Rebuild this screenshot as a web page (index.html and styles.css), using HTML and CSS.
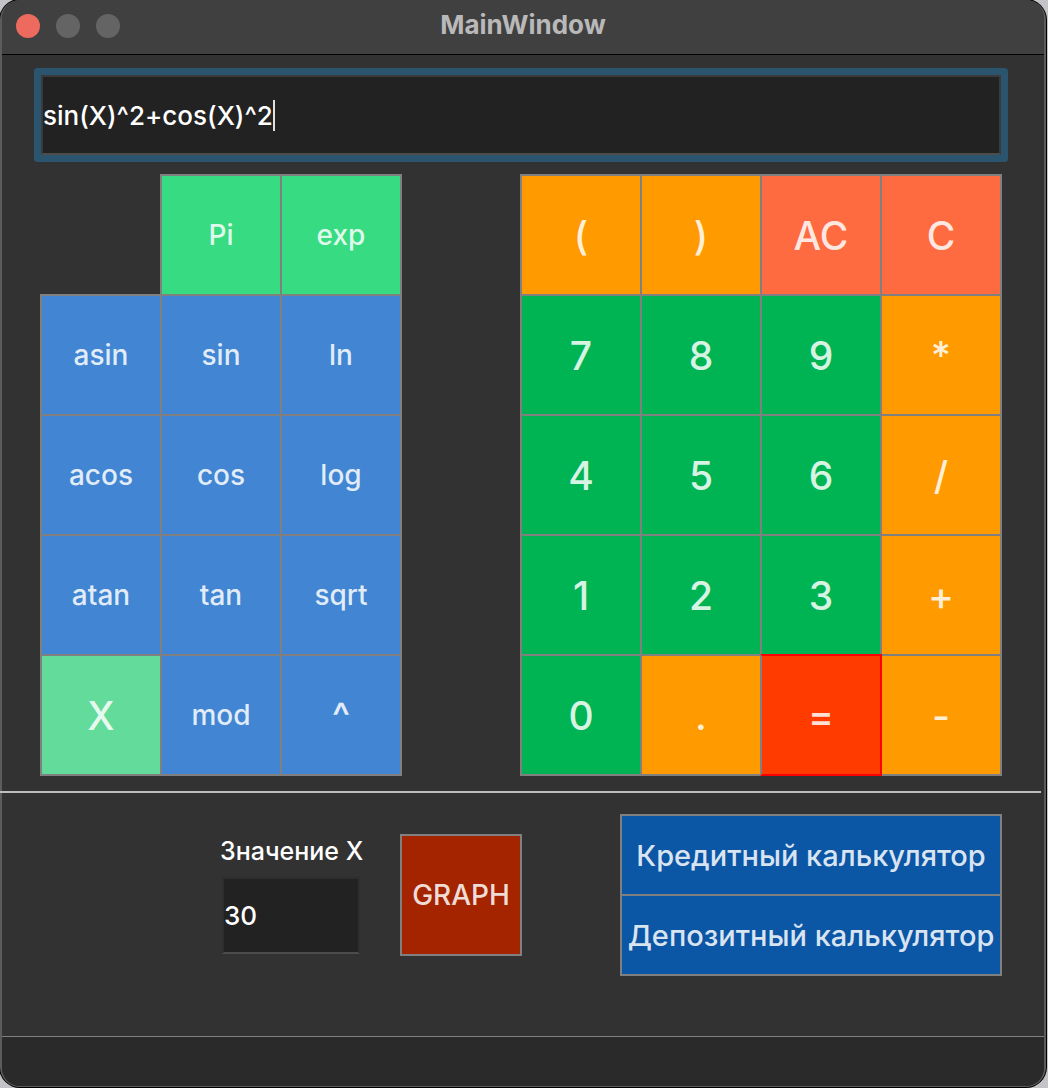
FILE: index.html
```html
<!DOCTYPE html>
<html lang="ru">
<head>
<meta charset="utf-8">
<meta name="viewport" content="width=device-width, initial-scale=1">
<title>MainWindow</title>
<link rel="stylesheet" href="styles.css">
</head>
<body>
<div class="window">
  <header class="titlebar">
    <div class="lights">
      <button class="light light-close" type="button" aria-label="Close"></button>
      <button class="light" type="button" aria-label="Minimize"></button>
      <button class="light" type="button" aria-label="Zoom"></button>
    </div>
    <h1 class="title">MainWindow</h1>
  </header>
  <main class="content">
    <div class="display">
      <input class="edit display-input" type="text" aria-label="Expression" value="sin(X)^2+cos(X)^2">
      <span class="caret"></span>
    </div>
    <div class="pads">
      <div class="pad pad-functions">
        <button class="key constant first" type="button">Pi</button>
        <button class="key constant" type="button">exp</button>
        <button class="key function" type="button">asin</button>
        <button class="key function" type="button">sin</button>
        <button class="key function" type="button">ln</button>
        <button class="key function" type="button">acos</button>
        <button class="key function" type="button">cos</button>
        <button class="key function" type="button">log</button>
        <button class="key function" type="button">atan</button>
        <button class="key function" type="button">tan</button>
        <button class="key function" type="button">sqrt</button>
        <button class="key variable large" type="button">X</button>
        <button class="key function" type="button">mod</button>
        <button class="key function large" type="button">^</button>
      </div>
      <div class="pad pad-numbers">
        <button class="key operator large" type="button">(</button>
        <button class="key operator large" type="button">)</button>
        <button class="key clear large" type="button">AC</button>
        <button class="key clear large" type="button">C</button>
        <button class="key digit large" type="button">7</button>
        <button class="key digit large" type="button">8</button>
        <button class="key digit large" type="button">9</button>
        <button class="key operator large" type="button">*</button>
        <button class="key digit large" type="button">4</button>
        <button class="key digit large" type="button">5</button>
        <button class="key digit large" type="button">6</button>
        <button class="key operator large" type="button">/</button>
        <button class="key digit large" type="button">1</button>
        <button class="key digit large" type="button">2</button>
        <button class="key digit large" type="button">3</button>
        <button class="key operator large" type="button">+</button>
        <button class="key digit large" type="button">0</button>
        <button class="key operator large" type="button">.</button>
        <button class="key equals large" type="button">=</button>
        <button class="key operator large" type="button">-</button>
      </div>
    </div>
    <hr class="divider">
    <div class="tools">
      <div class="field">
        <label class="field-label" for="x-value">Значение X</label>
        <input class="edit field-input" id="x-value" type="text" value="30">
      </div>
      <button class="key graph" type="button">GRAPH</button>
      <div class="bank">
        <button class="key bank-key" type="button">Кредитный калькулятор</button>
        <button class="key bank-key" type="button">Депозитный калькулятор</button>
      </div>
    </div>
  </main>
  <footer class="statusbar"></footer>
</div>
</body>
</html>
```
FILE: styles.css
```css
*,
*::before {
  box-sizing: border-box;
}

body {
  margin: 0;
  padding: 0 2px 1px 0;
  background: #c4c4c8;
  color: #fff;
  font-family: Inter, "Liberation Sans", sans-serif;
  font-size: 26px;
  font-weight: 500;
}

.window {
  display: flex;
  flex-direction: column;
  min-height: calc(100vh - 1px);
  border: 2px solid #5c5c5c;
  border-top-width: 0;
  border-bottom-width: 1px;
  border-radius: 20px;
  background: #323232;
  box-shadow: 0 0 0 1px #000;
}

.titlebar {
  display: grid;
  grid-template-columns: 1fr auto 1fr;
  align-items: center;
  height: 55px;
  padding: 0 14px 2px;
  border-bottom: 1px solid #000;
  border-radius: 18px 18px 0 0;
  background: #404040;
}

.lights {
  display: flex;
  gap: 16px;
}

.light {
  width: 24px;
  height: 24px;
  padding: 0;
  border: 0;
  border-radius: 50%;
  background: #646464;
}

.light-close {
  background: #ec6a5e;
}

.title {
  margin: 0;
  padding-bottom: 2px;
  color: #b9b9b9;
  font-size: 26px;
  font-weight: 700;
  line-height: 32px;
}

.content {
  flex: 1;
}

.edit {
  display: block;
  padding: 0;
  border: 2px solid #2e2e2e;
  border-bottom-color: #4c4c4c;
  border-radius: 0;
  outline: 0;
  background: #222;
  color: #fff;
  font: inherit;
}

.display {
  position: relative;
  margin: 20px 43px 0 39px;
}

.display-input {
  width: 100%;
  height: 80px;
  border-color: #3a3a3a;
  border-bottom-color: #4c4c4c;
  border-radius: 1px;
  box-shadow: 0 0 0 7px #2b556f;
}

.caret {
  position: absolute;
  top: 25px;
  left: 232px;
  width: 2px;
  height: 31px;
  background: #e0e0e0;
}

.pads {
  display: grid;
  grid-template-columns: 3fr 4fr;
  column-gap: 12.5%;
  margin: 19px 44px 0 38px;
}

.pad {
  display: grid;
  grid-auto-rows: 120px;
}

.pad-functions {
  grid-template-columns: repeat(3, 1fr);
}

.pad-numbers {
  grid-template-columns: repeat(4, 1fr);
}

/* Neighbouring keys share one two-pixel border. */
.key {
  margin: 0 -2px -2px 0;
  padding: 0;
  border: 2px solid #808080;
  color: rgba(255, 255, 255, 0.85);
  font-family: inherit;
  font-size: 28px;
  font-weight: 500;
  white-space: nowrap;
}

.large {
  font-size: 39px;
}

.first {
  grid-column: 2;
}

.constant {
  background: #37db82;
}

.function {
  background: #4286d3;
}

.variable {
  background: #63db9a;
}

.operator {
  background: #ff9a00;
}

.clear {
  background: #ff6b40;
}

.digit {
  background: #00b453;
}

.equals {
  z-index: 1;
  border-color: #f00;
  border-left-color: #808080;
  background: #ff3b00;
}

.divider {
  height: 2px;
  margin: 17px 3px 0 -2px;
  border: 0;
  background: #bebebe;
}

.tools {
  display: grid;
  grid-template-columns:
    minmax(0, 9fr) minmax(0, 9fr) minmax(0, 6fr)
    minmax(0, 5fr) minmax(0, 19fr);
  align-items: start;
  margin: 21px 44px 60px 38px;
}

.field {
  grid-column: 2;
  margin-top: 20px;
}

.field-label {
  display: block;
  font-size: 25px;
  line-height: 34px;
  white-space: nowrap;
}

.field-input {
  width: 138px;
  height: 77px;
  margin: 9px 0 0 2px;
}

.graph {
  height: 122px;
  margin-top: 20px;
  background: #a52400;
}

.bank {
  display: grid;
  grid-column: 5;
  grid-auto-rows: 80px;
}

.bank-key {
  background: #0c56a6;
  font-size: 29px;
}

.statusbar {
  height: 50px;
  border-top: 1px solid #808080;
  border-radius: 0 0 18px 18px;
  background: #2a2a2a;
}
```
